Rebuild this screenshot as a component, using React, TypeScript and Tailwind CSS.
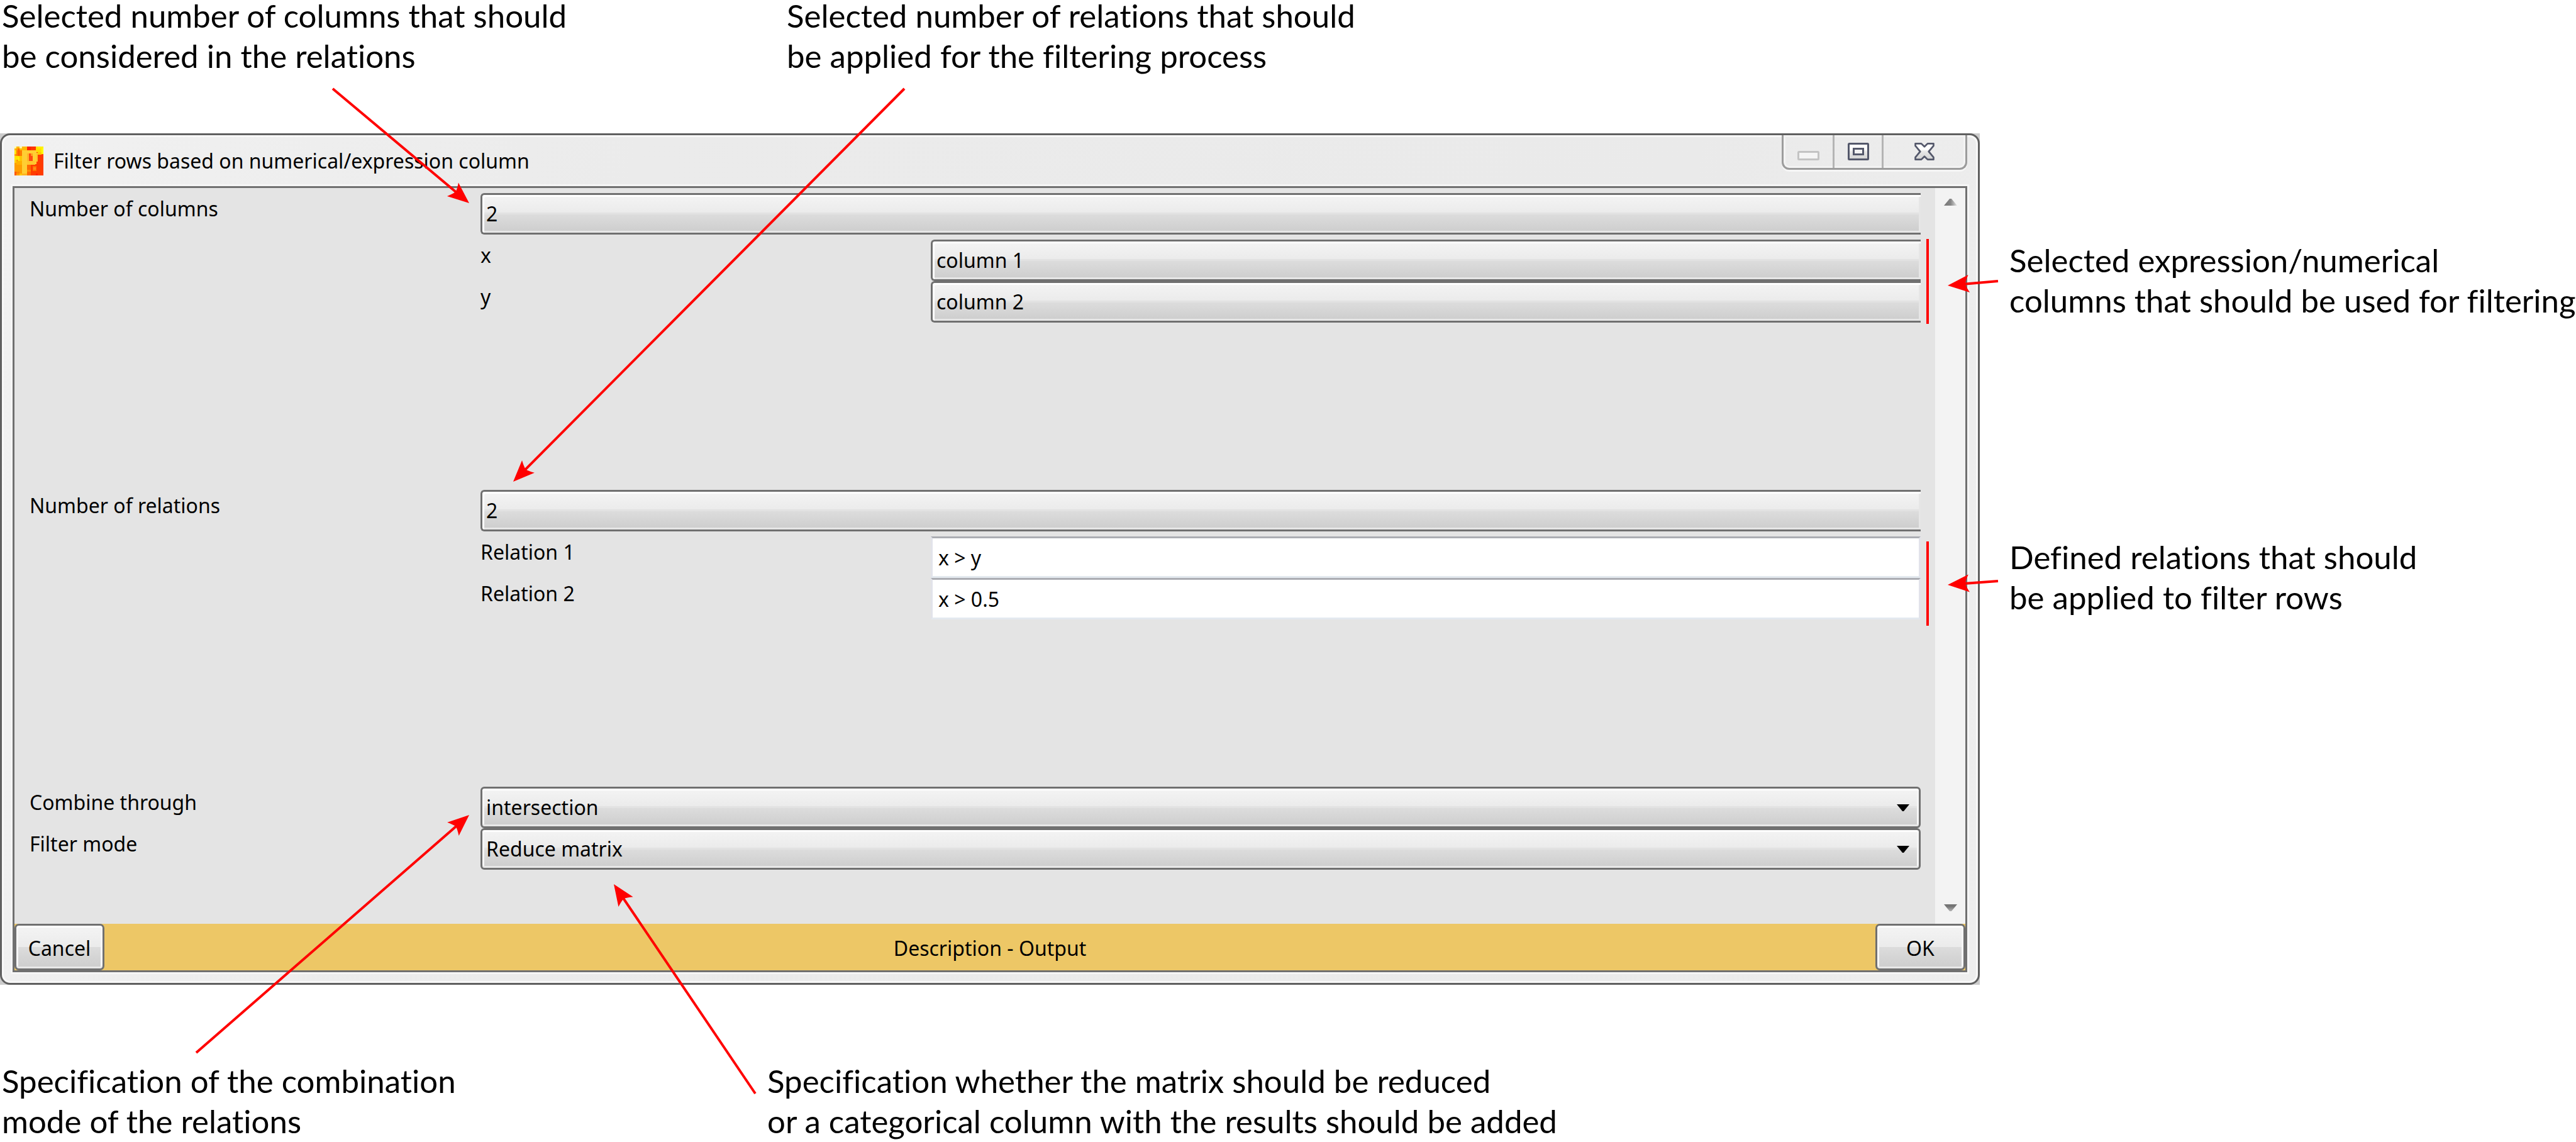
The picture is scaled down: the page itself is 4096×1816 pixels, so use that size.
import React, { ReactNode } from "react";
import clsx from "clsx";

const selectBase =
  "block h-[66px] w-full appearance-none border-[3px] border-[#707070] bg-[linear-gradient(#f4f4f4_0%,#ebebeb_47%,#e2e2e2_47%,#e2e2e2_52%,#dcdcdc_52%,#cdcdcd_100%)] pl-[6px] text-[32px] text-black outline-none";

function Annotation({ lines }: { lines: string[] }) {
  return (
    <p className="flex flex-col gap-[14px] pl-[3px] font-['Lato',sans-serif] text-[51px] leading-[50px] whitespace-nowrap text-black [font-variant-ligatures:none]">
      {lines.map((line) => (
        <span key={line}>{line}</span>
      ))}
    </p>
  );
}

function Select({
  id,
  options,
  value,
  clipped,
}: {
  id: string;
  options: string[];
  value: string;
  clipped?: boolean;
}) {
  return (
    <div className="relative">
      <select
        id={id}
        defaultValue={value}
        className={clsx(
          selectBase,
          clipped
            ? "rounded-l-[6px] border-r-0 shadow-[inset_3px_3px_0_#ffffff,inset_-3px_-3px_0_#e6e6e6]"
            : "rounded-[6px] shadow-[inset_0_3px_0_#ffffff,inset_0_-3px_0_#e8e8e8,inset_3px_0_0_#f6f6f6,inset_-3px_0_0_#f6f6f6]",
        )}
      >
        {options.map((o) => (
          <option key={o}>{o}</option>
        ))}
      </select>
      {!clipped && (
        <svg
          className="pointer-events-none absolute top-[28px] right-[18px] h-[11px] w-[20px]"
          viewBox="0 0 20 11"
          aria-hidden="true"
        >
          <path d="M0 0H20L11 11H9Z" fill="#000" />
        </svg>
      )}
    </div>
  );
}

function Label({ htmlFor, children, className }: { htmlFor: string; children: ReactNode; className?: string }) {
  return (
    <label htmlFor={htmlFor} className={clsx("pt-[5px] leading-10", className)}>
      {children}
    </label>
  );
}

function Group({ children }: { children: ReactNode }) {
  return <div className="grid min-h-[472px] grid-cols-[717fr_716fr_1574fr] content-start">{children}</div>;
}

function TextField({ id, value }: { id: string; value: string }) {
  return (
    <input
      id={id}
      type="text"
      defaultValue={value}
      className="block h-[66px] w-full border-t-[3px] border-r-[3px] border-b-[3px] border-l-[3px] border-t-[#abadb3] border-r-[#e2e3ea] border-b-[#e3e9ef] border-l-[#e2e3ea] bg-white pl-[9px] text-[32px] text-black outline-none"
    />
  );
}

function PushButton({ children }: { children: ReactNode }) {
  return (
    <button
      type="button"
      className="h-[74px] w-[143px] rounded-[7px] border-[3px] border-[#707070] bg-[linear-gradient(#f4f4f4_0%,#ebebeb_50%,#dcdcdc_50%,#cdcdcd_100%)] pt-[3px] shadow-[inset_0_3px_0_#ffffff,inset_0_-3px_0_#e8e8e8,inset_3px_0_0_#f6f6f6,inset_-3px_0_0_#f6f6f6]"
    >
      {children}
    </button>
  );
}

const mosaic: [number, number, number, number, string][] = [
  [0, 0, 150, 150, "#ff9d00"],
  [66, 0, 84, 150, "#ff3c00"],
  [0, 0, 66, 18, "#ffb800"],
  [0, 0, 9, 9, "#ffffa0"],
  [27, 0, 12, 9, "#fff79a"],
  [9, 9, 18, 9, "#ff9400"],
  [0, 18, 9, 20, "#ffe600"],
  [9, 18, 30, 30, "#ff7a00"],
  [18, 9, 9, 39, "#ff5a00"],
  [0, 48, 27, 20, "#ffe600"],
  [18, 57, 9, 18, "#fff200"],
  [27, 48, 12, 27, "#ffc400"],
  [0, 68, 9, 18, "#ffd000"],
  [9, 75, 30, 18, "#ffb000"],
  [0, 131, 9, 19, "#ff5a00"],
  [9, 131, 18, 10, "#ff8400"],
  [27, 141, 12, 9, "#ffc800"],
  [66, 0, 18, 18, "#ff2400"],
  [84, 0, 28, 9, "#ff3400"],
  [112, 0, 38, 28, "#ffe000"],
  [122, 0, 28, 9, "#fff000"],
  [141, 9, 9, 30, "#ffff00"],
  [122, 28, 19, 14, "#ffc800"],
  [112, 18, 19, 10, "#ffd800"],
  [66, 93, 18, 57, "#ff6a00"],
  [66, 122, 18, 10, "#ff8a00"],
  [93, 102, 21, 24, "#ff7000"],
  [97, 108, 14, 12, "#ff8c1a"],
  [112, 141, 10, 9, "#ff2000"],
  [39, 18, 27, 123, "#ffce33"],
  [39, 141, 27, 9, "#ffb41e"],
  [66, 18, 46, 18, "#ffce33"],
  [93, 22, 20, 68, "#ffce33"],
  [113, 34, 9, 44, "#ffc02c"],
  [66, 75, 40, 18, "#ffc62e"],
  [66, 36, 27, 39, "#ff4a10"],
  [66, 36, 10, 39, "#ffb428"],
  [84, 36, 9, 12, "#ff9a20"],
];

function AppIcon() {
  return (
    <svg className="size-[46px]" viewBox="0 0 150 150" shapeRendering="crispEdges" aria-hidden="true">
      {mosaic.map(([x, y, w, h, fill], i) => (
        <rect key={i} x={x} y={y} width={w} height={h} fill={fill} />
      ))}
    </svg>
  );
}

function CaptionButtons() {
  const cell = "flex items-end justify-center pb-3";
  return (
    <div className="flex h-[55px] self-start rounded-b-[12px] border-x-[3px] border-b-[3px] border-[#9c9c9c] shadow-[0_3px_0_#f6f6f6,inset_0_0_0_3px_#f3f3f3]">
      <button type="button" aria-label="Minimize" className={clsx(cell, "w-[78px]")}>
        <svg className="h-[15px] w-[35px]" viewBox="0 0 35 15">
          <rect x="1.5" y="1.5" width="32" height="12" rx="1" fill="#f5f5f5" stroke="#c3c3c3" strokeWidth="3" />
        </svg>
      </button>
      <button type="button" aria-label="Maximize" className={clsx(cell, "w-[78px] border-l-[3px] border-[#b4b4b4]")}>
        <svg className="h-[28px] w-[34px]" viewBox="0 0 34 28">
          <defs>
            <linearGradient id="glyph" x1="0" y1="0" x2="0" y2="1">
              <stop offset="0.35" stopColor="#ffffff" />
              <stop offset="0.5" stopColor="#e8e8e8" />
              <stop offset="1" stopColor="#d2d2d2" />
            </linearGradient>
          </defs>
          <rect x="1.5" y="1.5" width="31" height="25" rx="1" fill="url(#glyph)" stroke="#54586b" strokeWidth="3" />
          <rect x="9.5" y="9.5" width="15" height="9" fill="#f3f3f3" stroke="#54586b" strokeWidth="3" />
        </svg>
      </button>
      <button type="button" aria-label="Close" className={clsx(cell, "w-[133px] border-l-[3px] border-[#b4b4b4]")}>
        <svg className="h-[28px] w-[32px]" viewBox="0 0 35 31">
          <path
            d="M1.5 1.5H12L17.5 7L23 1.5H33.5V5.5L25 15.5L33.5 25.5V29.5H23L17.5 24L12 29.5H1.5V25.5L10 15.5L1.5 5.5Z"
            fill="url(#glyph)"
            stroke="#54586b"
            strokeWidth="3"
            strokeLinejoin="round"
          />
        </svg>
      </button>
    </div>
  );
}

function ScrollBar() {
  return (
    <div className="flex w-12 flex-col items-center justify-between bg-[#f3f3f3] pt-[17px] pb-5">
      <button type="button" aria-label="Scroll up">
        <svg className="block h-[11px] w-[21px]" viewBox="0 0 21 11">
          <defs>
            <linearGradient id="up" x1="0" y1="0" x2="1" y2="0">
              <stop offset="0.1" stopColor="#7a7a7a" />
              <stop offset="0.5" stopColor="#858585" />
              <stop offset="1" stopColor="#e4e4e4" />
            </linearGradient>
          </defs>
          <path d="M0 11L9 0H12L21 11Z" fill="url(#up)" />
        </svg>
      </button>
      <button type="button" aria-label="Scroll down">
        <svg className="block h-[11px] w-[21px]" viewBox="0 0 21 11">
          <defs>
            <linearGradient id="down" x1="0" y1="0" x2="0" y2="1">
              <stop offset="0.3" stopColor="#747474" />
              <stop offset="1" stopColor="#b4b4b4" />
            </linearGradient>
          </defs>
          <path d="M0 0H21L12 11H9Z" fill="url(#down)" />
        </svg>
      </button>
    </div>
  );
}

function Dialog() {
  return (
    <div className="bg-[#cccccc] font-['Noto_Sans',sans-serif] text-[32px] text-black">
      <section
        aria-label="Filter rows based on numerical/expression column"
        className="rounded-[16px] border-[3px] border-[#5f5f5f] bg-[linear-gradient(100deg,#f1f1f1_0%,#ebebeb_30%,#eaeaea_80%,#eeeeee_100%)] px-[17px] pb-[17px] shadow-[inset_0_0_0_3px_#f8f8f8]"
      >
        <header className="flex h-[81px] items-center justify-between">
          <div className="flex items-center gap-4 pl-[3px]">
            <AppIcon />
            <h1 className="leading-10">Filter rows based on numerical/expression column</h1>
          </div>
          <CaptionButtons />
        </header>

        <div className="border-[3px] border-[#707070] shadow-[0_0_0_3px_#f6f6f6]">
          <div className="flex bg-[#e4e4e4]">
            <form className="flex-1 pt-2 pr-[23px] pl-6">
              <Group>
                <Label htmlFor="column-count">Number of columns</Label>
                <div className="col-span-2 mb-2">
                  <Select id="column-count" value="2" options={["1", "2", "3", "4", "5"]} clipped />
                </div>
                <Label htmlFor="column-x" className="col-start-2">
                  x
                </Label>
                <Select id="column-x" value="column 1" options={["column 1", "column 2"]} clipped />
                <Label htmlFor="column-y" className="col-start-2">
                  y
                </Label>
                <Select id="column-y" value="column 2" options={["column 1", "column 2"]} clipped />
              </Group>
              <Group>
                <Label htmlFor="relation-count">Number of relations</Label>
                <div className="col-span-2 mb-2">
                  <Select id="relation-count" value="2" options={["1", "2", "3", "4", "5"]} clipped />
                </div>
                <Label htmlFor="relation-1" className="col-start-2">
                  Relation 1
                </Label>
                <TextField id="relation-1" value="x &gt; y" />
                <Label htmlFor="relation-2" className="col-start-2">
                  Relation 2
                </Label>
                <TextField id="relation-2" value="x &gt; 0.5" />
              </Group>
              <div className="grid grid-cols-[717fr_2290fr] pb-[86px]">
                <Label htmlFor="combine">Combine through</Label>
                <Select id="combine" value="intersection" options={["intersection", "union"]} />
                <Label htmlFor="mode">Filter mode</Label>
                <Select id="mode" value="Reduce matrix" options={["Reduce matrix", "Add categorical column"]} />
              </div>
            </form>
            <ScrollBar />
          </div>

          <footer className="flex items-center justify-between bg-[#edc766]">
            <PushButton>Cancel</PushButton>
            <span className="pt-[3px]">Description - Output</span>
            <PushButton>OK</PushButton>
          </footer>
        </div>
      </section>
    </div>
  );
}

function Arrow({ from, to }: { from: [number, number]; to: [number, number] }) {
  const [x1, y1] = from;
  const [x2, y2] = to;
  const length = Math.hypot(x2 - x1, y2 - y1);
  const angle = (Math.atan2(y2 - y1, x2 - x1) * 180) / Math.PI;
  return (
    <g transform={`translate(${x2} ${y2}) rotate(${angle})`}>
      <path d={`M${-length} 0H-26`} stroke="#ff0000" strokeWidth="4" />
      <path d="M0 0L-34 -14Q-29 -5 -28 0Q-29 5 -34 14Z" fill="#ff0000" />
    </g>
  );
}

function Callouts() {
  return (
    <svg className="pointer-events-none absolute top-0 left-0 w-full" viewBox="0 0 4096 1816" aria-hidden="true">
      <Arrow from={[529, 141]} to={[746, 323]} />
      <Arrow from={[1438, 141]} to={[816, 766]} />
      <Arrow from={[3177, 447]} to={[3097, 454]} />
      <Arrow from={[3177, 924]} to={[3097, 930]} />
      <Arrow from={[312, 1674]} to={[746, 1296]} />
      <Arrow from={[1201, 1739]} to={[976, 1406]} />
      <path d="M3065 380V515M3065 861V995" stroke="#ff0000" strokeWidth="4" />
    </svg>
  );
}

export default function App() {
  return (
    <main className="relative min-h-screen overflow-hidden bg-white">
      <div className="grid h-[212px] grid-cols-[1248fr_2848fr]">
        <Annotation lines={["Selected number of columns that should", "be considered in the relations"]} />
        <Annotation lines={["Selected number of relations that should", "be applied for the filtering process"]} />
      </div>

      <div className="grid grid-cols-[3148fr_948fr]">
        <Dialog />
        <div className="flex flex-col gap-[358px] pt-[177px] pl-11">
          <Annotation lines={["Selected expression/numerical", "columns that should be used for filtering"]} />
          <Annotation lines={["Defined relations that should", "be applied to filter rows"]} />
        </div>
      </div>

      <div className="grid grid-cols-[1217fr_2879fr] pt-32">
        <Annotation lines={["Specification of the combination", "mode of the relations"]} />
        <Annotation
          lines={[
            "Specification whether the matrix should be reduced",
            "or a categorical column with the results should be added",
          ]}
        />
      </div>

      <Callouts />
    </main>
  );
}
